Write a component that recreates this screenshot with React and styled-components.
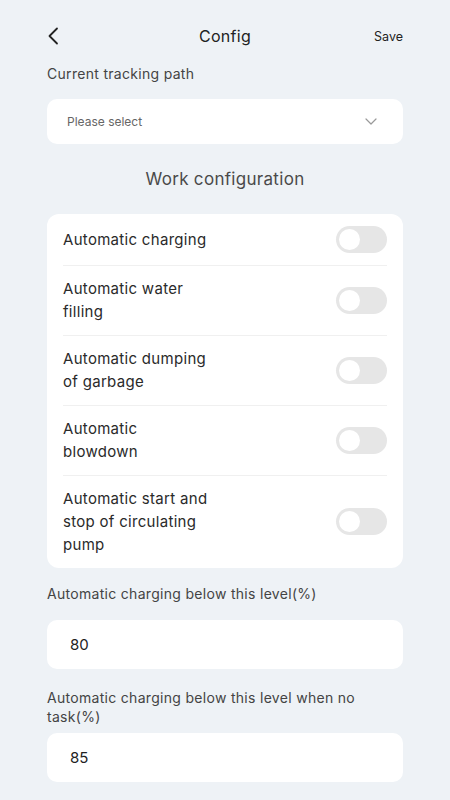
import React from 'react';
import styled, { createGlobalStyle } from 'styled-components';

const GlobalStyle = createGlobalStyle`
  * { box-sizing: border-box; }
  body {
    margin: 0;
    background: #eef2f6;
    font-family: Inter, "Noto Sans", "Liberation Sans", sans-serif;
    color: #333;
  }
`;

const Page = styled.div`
  width: 450px;
  min-height: 800px;
  padding: 0 47px 20px;
  background: #eef2f6;
`;

const Header = styled.div`
  height: 64px;
  padding-top: 8px;
  display: flex;
  align-items: center;
  justify-content: space-between;
  position: relative;
`;

const BackButton = styled.button`
  border: 0;
  background: none;
  padding: 0;
  width: 14px;
  height: 20px;
  display: flex;
  align-items: center;
  cursor: pointer;
`;

const Title = styled.h1`
  position: absolute;
  left: 0;
  right: 0;
  top: 8px;
  bottom: 0;
  margin: 0;
  display: flex;
  align-items: center;
  justify-content: center;
  font-size: 16px;
  font-weight: 400;
  letter-spacing: 0.3px;
  color: #222;
  pointer-events: none;
`;

const SaveButton = styled.button`
  border: 0;
  background: none;
  padding: 0;
  font-family: inherit;
  font-size: 12.5px;
  color: #222;
  cursor: pointer;
`;

const FieldLabel = styled.div`
  font-size: 14px;
  line-height: 19px;
  letter-spacing: 0.3px;
  color: #444;
  margin-bottom: ${p => p.$gap || 16}px;
`;

const Select = styled.div`
  height: 45px;
  background: #fff;
  border-radius: 10px;
  display: flex;
  align-items: center;
  justify-content: space-between;
  padding: 0 26px 0 20px;
  font-size: 12px;
  color: #666;
`;

const SectionTitle = styled.h2`
  margin: 0;
  height: 70px;
  display: flex;
  align-items: center;
  justify-content: center;
  font-size: 17px;
  font-weight: 400;
  letter-spacing: 0.3px;
  color: #4a4a4a;
`;

const Card = styled.div`
  background: #fff;
  border-radius: 12px;
  padding: 0 16px;
`;

const Row = styled.div`
  display: flex;
  align-items: center;
  justify-content: space-between;
  padding: 12px 0;
  & + & {
    padding-top: 11px;
    border-top: 1px solid #f0f0f0;
  }
`;

const RowText = styled.div`
  max-width: 150px;
  font-size: 15px;
  line-height: 23px;
  letter-spacing: 0.3px;
  color: #2a2a2a;
`;

const Toggle = styled.div`
  width: 51px;
  height: 27px;
  border-radius: 14px;
  background: ${p => (p.$on ? '#3a7afe' : '#e6e6e6')};
  padding: 3px;
  display: flex;
  justify-content: ${p => (p.$on ? 'flex-end' : 'flex-start')};
  &::after {
    content: '';
    width: 21px;
    height: 21px;
    border-radius: 50%;
    background: #fff;
  }
`;

const Field = styled.div`
  margin-top: ${p => p.$top}px;
`;

const Input = styled.div`
  height: 49px;
  background: #fff;
  border-radius: 10px;
  display: flex;
  align-items: center;
  padding: 0 23px;
  font-size: 15px;
  color: #222;
`;

const switches = [
  'Automatic charging',
  'Automatic water filling',
  'Automatic dumping of garbage',
  'Automatic blowdown',
  'Automatic start and stop of circulating pump',
];

export default function App() {
  return (
    <Page>
      <GlobalStyle />
      <Header>
        <BackButton aria-label="Back">
          <svg width="12" height="18" viewBox="0 0 12 18" fill="none">
            <path d="M10 1.5L2.5 9L10 16.5" stroke="#222" strokeWidth="1.8" strokeLinecap="round" strokeLinejoin="round" />
          </svg>
        </BackButton>
        <Title>Config</Title>
        <SaveButton>Save</SaveButton>
      </Header>

      <FieldLabel>Current tracking path</FieldLabel>
      <Select>
        <span>Please select</span>
        <svg width="12" height="7" viewBox="0 0 12 7" fill="none">
          <path d="M1 1l5 5 5-5" stroke="#999" strokeWidth="1.2" strokeLinecap="round" strokeLinejoin="round" />
        </svg>
      </Select>

      <SectionTitle>Work configuration</SectionTitle>

      <Card>
        {switches.map(s => (
          <Row key={s}>
            <RowText>{s}</RowText>
            <Toggle />
          </Row>
        ))}
      </Card>

      <Field $top={16}>
        <FieldLabel $gap={17}>Automatic charging below this level(%)</FieldLabel>
        <Input>80</Input>
      </Field>

      <Field $top={19}>
        <FieldLabel $gap={7}>Automatic charging below this level when no task(%)</FieldLabel>
        <Input>85</Input>
      </Field>
    </Page>
  );
}
